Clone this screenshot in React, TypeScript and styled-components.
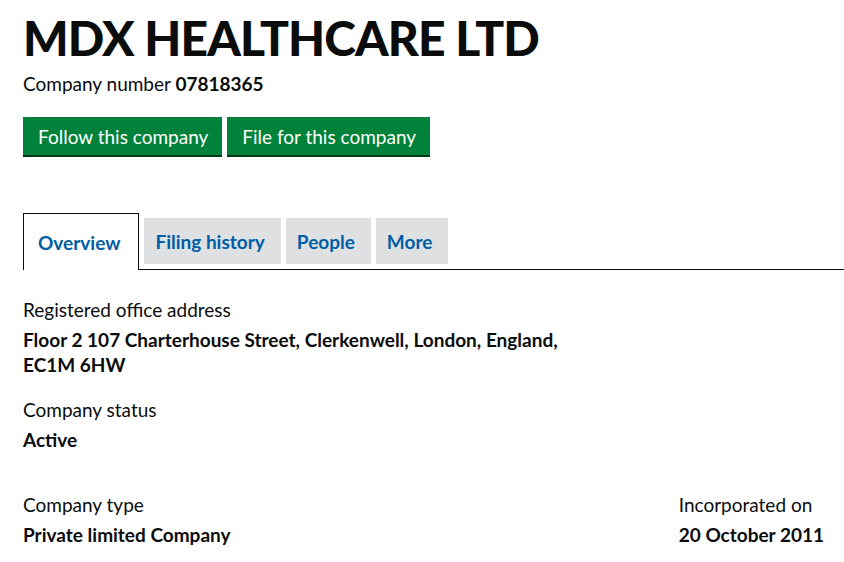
import React from "react";
import styled, { createGlobalStyle } from "styled-components";

const GlobalStyle = createGlobalStyle`
  html, body {
    margin: 0;
    padding: 0;
    background: #ffffff;
  }
  body {
    font-family: Lato, "Liberation Sans", Arial, sans-serif;
    color: #0b0c0c;
  }
`;

const Page = styled.div`
  padding: 13px 0 0 23px;
  width: 821px;
`;

const Title = styled.h1`
  margin: 0;
  font-size: 48px;
  line-height: 50px;
  font-weight: 900;
  letter-spacing: -0.9px;
`;

const CompanyNumber = styled.p`
  margin: 8px 0 0;
  font-size: 19px;
  line-height: 25px;

  strong {
    font-weight: 700;
  }
`;

const Actions = styled.div`
  display: flex;
  gap: 5px;
  margin-top: 21px;
`;

const Button = styled.a`
  display: flex;
  align-items: center;
  height: 38px;
  padding: 0 14px 0 15px;
  background: #00823b;
  box-shadow: 0 2px 0 #003618;
  color: #ffffff;
  font-size: 19px;
  text-decoration: none;
`;

const TabList = styled.ul`
  display: flex;
  gap: 5px;
  list-style: none;
  margin: 58px 0 0;
  padding: 0;
  height: 56px;
  border-bottom: 1px solid #0b0c0c;
  align-items: flex-end;
`;

const Tab = styled.li<{ $active?: boolean }>`
  display: flex;
  align-items: center;
  box-sizing: border-box;
  font-size: 19px;
  font-weight: 700;
  color: #005ea5;
  ${(p) =>
    p.$active
      ? `
    height: 57px;
    padding: 0 18px 0 14px;
    border: 1px solid #0b0c0c;
    border-bottom: none;
    margin-bottom: -1px;
    background: #ffffff;
  `
      : `
    height: 46px;
    padding: 0 16px 0 11px;
    background: #dee0e2;
    margin-bottom: 5px;
  `}
`;

const Details = styled.div`
  padding-top: 27px;
`;

const Field = styled.div<{ $gap?: number }>`
  margin-top: ${(p) => p.$gap ?? 0}px;
`;

const Label = styled.div`
  font-size: 19px;
  line-height: 25px;
`;

const Value = styled.div`
  margin-top: 5px;
  font-size: 19px;
  line-height: 25px;
  font-weight: 700;
  max-width: 560px;
`;

const Row = styled.div`
  display: flex;
  justify-content: space-between;
  padding-right: 20px;
  margin-top: 40px;
`;

export default function App() {
  return (
    <>
      <GlobalStyle />
      <Page>
        <Title>MDX HEALTHCARE LTD</Title>
        <CompanyNumber>
          Company number <strong>07818365</strong>
        </CompanyNumber>
        <Actions>
          <Button>Follow this company</Button>
          <Button>File for this company</Button>
        </Actions>
        <TabList>
          <Tab $active>Overview</Tab>
          <Tab>Filing history</Tab>
          <Tab>People</Tab>
          <Tab>More</Tab>
        </TabList>
        <Details>
          <Field>
            <Label>Registered office address</Label>
            <Value>
              Floor 2 107 Charterhouse Street, Clerkenwell, London, England,
              EC1M 6HW
            </Value>
          </Field>
          <Field $gap={20}>
            <Label>Company status</Label>
            <Value>Active</Value>
          </Field>
          <Row>
            <Field>
              <Label>Company type</Label>
              <Value>Private limited Company</Value>
            </Field>
            <Field>
              <Label>Incorporated on</Label>
              <Value>20 October 2011</Value>
            </Field>
          </Row>
        </Details>
      </Page>
    </>
  );
}
